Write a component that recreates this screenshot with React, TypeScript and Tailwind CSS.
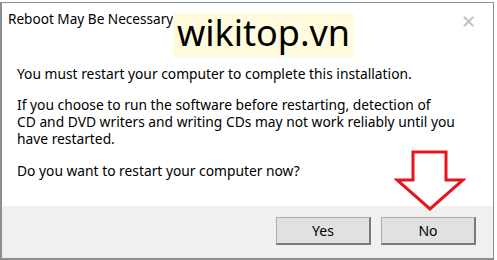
import React from 'react';

// Outline arrow drawn over the dialog, pointing at the "No" button
const DownArrow = () => (
    <svg className="absolute left-[394px] top-[150px]" width="72" height="62" viewBox="0 0 72 62">
        <path
            d="M19 2 H52 V30 H69 L36 59 L3 30 H19 Z"
            fill="none"
            stroke="#e8141b"
            strokeWidth="3"
            strokeLinejoin="miter"
        />
    </svg>
);

const DialogButton: React.FC<{ label: string }> = ({ label }) => (
    <button className="w-[95px] h-[28px] bg-[#e1e1e1] border border-[#adadad] border-r-2 border-b-2 border-r-[#7a7a7a] border-b-[#7a7a7a] text-[14px] text-black">
        {label}
    </button>
);

export default function App() {
    return (
        <div
            className="w-[497px] h-[260px] bg-white relative overflow-hidden"
            style={{ fontFamily: '"Noto Sans", "Open Sans", sans-serif' }}
        >
            <div className="mt-[2px] w-[494px] h-[258px] border border-[#8e8e8e] border-l-2 border-b-2 flex flex-col bg-white">
                <div className="h-[38px] flex items-start justify-between pl-[6px] pr-[17px] pt-[6px]">
                    <span className="text-[13.6px] text-black leading-[20px]">Reboot May Be Necessary</span>
                    <span className="text-[18px] text-[#bdbdbd] leading-[20px] font-light mt-[2px]">✕</span>
                </div>
                <div className="flex-1 pl-[15px] pr-[10px] pt-[24px] text-[13.8px] leading-[17px] text-black">
                    <p>You must restart your computer to complete this installation.</p>
                    <p className="mt-[14px]">
                        If you choose to run the software before restarting, detection of
                        <br />
                        CD and DVD writers and writing CDs may not work reliably until you
                        <br />
                        have restarted.
                    </p>
                    <p className="mt-[15px]">Do you want to restart your computer now?</p>
                </div>
                <div className="h-[52px] bg-[#f0f0f0] flex items-center justify-end gap-[10px] pr-[17px] pb-[2px]">
                    <DialogButton label="Yes" />
                    <DialogButton label="No" />
                </div>
            </div>

            <div className="absolute left-[173px] top-[13px] w-[181px] h-[44px] bg-[#fffbdc] flex items-center justify-center">
                <span className="text-[36px] leading-none text-black mt-[-4px]">wikitop.vn</span>
            </div>

            <DownArrow />
        </div>
    );
}
